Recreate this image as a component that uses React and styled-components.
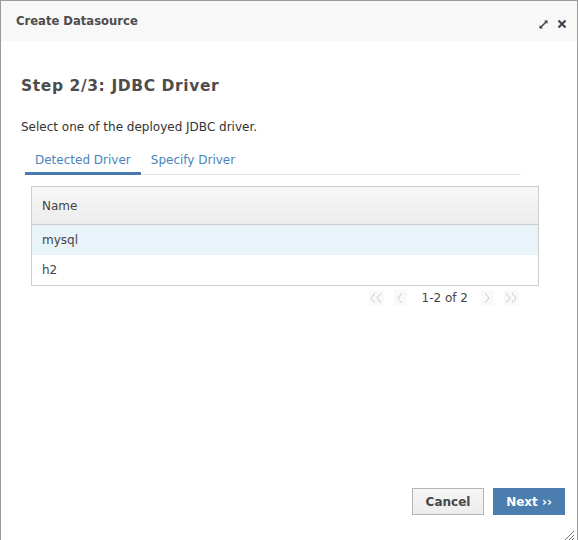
import React from "react";
import styled, { createGlobalStyle } from "styled-components";

const Global = createGlobalStyle`
  html, body { margin: 0; padding: 0; background: #fff; }
  body { font-family: "DejaVu Sans", "Noto Sans", sans-serif; color: #4a4a4a; }
  * { box-sizing: border-box; }
`;

const Dialog = styled.div`
  position: relative;
  width: 578px;
  height: 540px;
  border: 1px solid #9a9a9a;
  border-bottom: none;
  display: flex;
  flex-direction: column;
  background: #fff;
`;

const Header = styled.div`
  height: 40px;
  flex: none;
  background: #f8f8f8;
  display: flex;
  align-items: center;
  padding: 0 10px 0 15px;
`;

const Title = styled.div`
  flex: 1;
  font-size: 11.6px;
  font-weight: 700;
  color: #4d4d4d;
  margin-top: 0;
`;

const HeaderIcons = styled.div`
  display: flex;
  gap: 8px;
  align-items: center;
  margin-top: 6px;
`;

const Body = styled.div`
  flex: 1;
  display: flex;
  flex-direction: column;
  padding: 35px 20px 0 20px;
`;

const StepTitle = styled.h2`
  margin: 0;
  font-size: 15.5px;
  letter-spacing: 0.6px;
  font-weight: 700;
  color: #4d4d4d;
  line-height: 20px;
`;

const Lead = styled.p`
  margin: 22px 0 0 0;
  font-size: 12px;
  line-height: 18px;
  color: #333;
`;

const Tabs = styled.div`
  display: flex;
  margin: 10px 36px 0 4px;
  border-bottom: 1px solid #e5e5e5;
`;

const Tab = styled.div`
  padding: 5px 10px 3px 10px;
  font-size: 12px;
  line-height: 18px;
  color: #4a84bd;
  border-bottom: 3px solid ${(p) => (p.$active ? "#4a7aab" : "transparent")};
  margin-bottom: -1px;
`;

const TableBox = styled.div`
  margin: 11px 18px 0 10px;
  border: 1px solid #cdcdcd;
`;

const HeadRow = styled.div`
  height: 38px;
  display: flex;
  align-items: center;
  padding: 0 10px;
  font-size: 12px;
  color: #444;
  background: linear-gradient(#f8f8f8, #ececec);
  border-bottom: 1px solid #cdcdcd;
`;

const Row = styled.div`
  height: 30px;
  display: flex;
  align-items: center;
  padding: 0 10px;
  font-size: 12px;
  color: #444;
  background: ${(p) => (p.$selected ? "#e8f3fa" : "#fff")};
`;

const Pager = styled.div`
  display: flex;
  justify-content: flex-end;
  align-items: center;
  margin: 3px 38px 0 0;
  height: 18px;
`;

const PagerBtn = styled.div`
  width: ${(p) => p.$w}px;
  height: 16px;
  display: flex;
  align-items: center;
  justify-content: center;
  background: #f9f9f9;
  margin-left: ${(p) => p.$ml || 0}px;
`;

const PagerText = styled.div`
  font-size: 12px;
  color: #444;
  margin: 0 13px 0 15px;
`;

const Footer = styled.div`
  display: flex;
  justify-content: flex-end;
  gap: 9px;
  padding: 0 12px 25px 0;
`;

const Button = styled.button`
  height: 27px;
  width: 72px;
  padding: 0;
  font-family: inherit;
  font-size: 12px;
  font-weight: 700;
  border-radius: 0;
  cursor: pointer;
  ${(p) =>
    p.$primary
      ? `background: #4b7daf; color: #fff; border: 1px solid #4b7daf;`
      : `background: linear-gradient(#f6f6f6, #ececec); color: #474747; border: 1px solid #b5b5b5;`}
`;

const Grip = styled.div`
  position: absolute;
  right: 2px;
  bottom: 2px;
  width: 12px;
  height: 12px;
`;

const Chev = ({ double, dir }) => {
  const w = double ? 13 : 7;
  const a = dir === "left" ? "5,1 1,6 5,11" : "1,1 5,6 1,11";
  const b = dir === "left" ? "11,1 7,6 11,11" : "7,1 11,6 7,11";
  return (
    <svg width={w} height="12" viewBox={`0 0 ${w} 12`}>
      <polyline points={a} fill="none" stroke="#cdcdcd" strokeWidth="1" />
      {double && <polyline points={b} fill="none" stroke="#cdcdcd" strokeWidth="1" />}
    </svg>
  );
};

export default function App() {
  return (
    <>
      <Global />
      <Dialog>
        <Header>
          <Title>Create Datasource</Title>
          <HeaderIcons>
            <svg width="11" height="11" viewBox="0 0 11 11">
              <path d="M2 9 L9 2" stroke="#3f4652" strokeWidth="1.6" />
              <path d="M6 1.5 H9.5 V5 Z" fill="#3f4652" />
              <path d="M1.5 6 V9.5 H5 Z" fill="#3f4652" />
            </svg>
            <svg width="10" height="10" viewBox="0 0 10 10">
              <path d="M1.5 1.5 L8.5 8.5 M8.5 1.5 L1.5 8.5" stroke="#3f4652" strokeWidth="2.2" />
            </svg>
          </HeaderIcons>
        </Header>
        <Body>
          <StepTitle>Step 2/3: JDBC Driver</StepTitle>
          <Lead>Select one of the deployed JDBC driver.</Lead>
          <Tabs>
            <Tab $active>Detected Driver</Tab>
            <Tab>Specify Driver</Tab>
          </Tabs>
          <TableBox>
            <HeadRow>Name</HeadRow>
            <Row $selected>mysql</Row>
            <Row>h2</Row>
          </TableBox>
          <Pager>
            <PagerBtn $w={15}>
              <Chev double dir="left" />
            </PagerBtn>
            <PagerBtn $w={13} $ml={10}>
              <Chev dir="left" />
            </PagerBtn>
            <PagerText>1-2 of 2</PagerText>
            <PagerBtn $w={13}>
              <Chev dir="right" />
            </PagerBtn>
            <PagerBtn $w={15} $ml={10}>
              <Chev double dir="right" />
            </PagerBtn>
          </Pager>
        </Body>
        <Footer>
          <Button>Cancel</Button>
          <Button $primary>Next ››</Button>
        </Footer>
        <Grip>
          <svg width="12" height="12" viewBox="0 0 12 12">
            <path d="M11 2 L2 11 M11 6 L6 11 M11 9 L9 11" stroke="#777" strokeWidth="1" />
          </svg>
        </Grip>
      </Dialog>
    </>
  );
}
